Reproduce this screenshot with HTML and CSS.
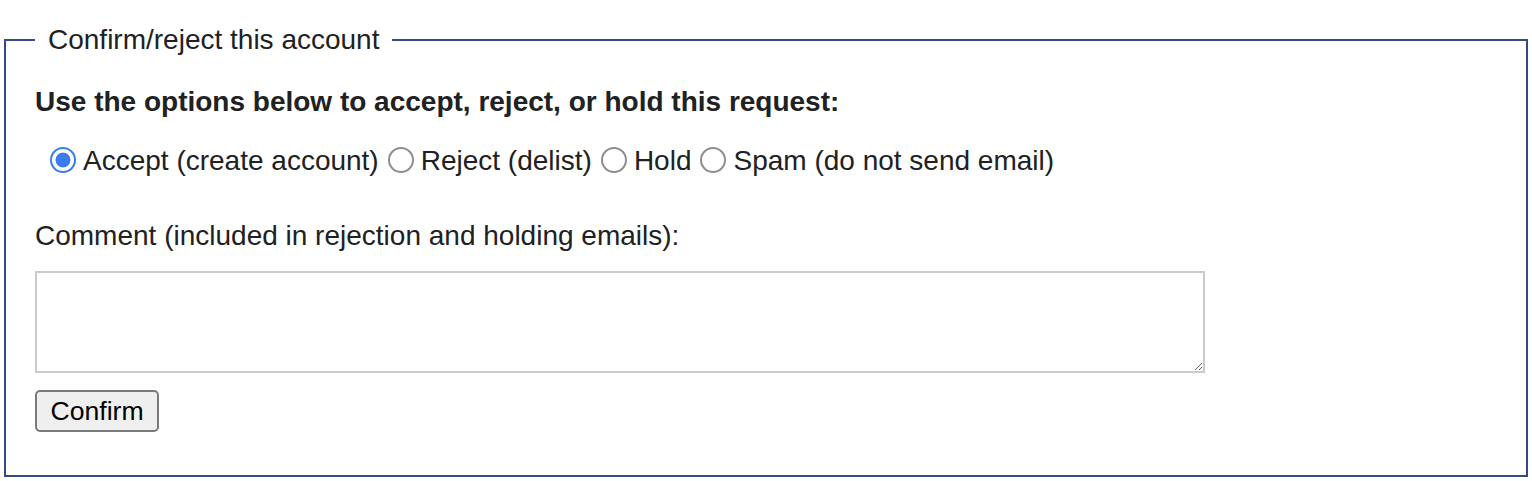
FILE: index.html
```html
<!DOCTYPE html>
<html lang="en">
<head>
<meta charset="utf-8">
<title>Confirm/reject this account</title>
<link rel="stylesheet" href="styles.css">
</head>
<body>
<form class="form">
  <fieldset class="box">
    <legend class="box-legend">Confirm/reject this account</legend>
    <p class="intro">Use the options below to accept, reject, or hold this request:</p>
    <div class="options">
      <label class="option"><input class="radio" type="radio" name="action" checked><span class="option-text">Accept (create account)</span></label>
      <label class="option"><input class="radio" type="radio" name="action"><span class="option-text">Reject (delist)</span></label>
      <label class="option"><input class="radio" type="radio" name="action"><span class="option-text">Hold</span></label>
      <label class="option"><input class="radio" type="radio" name="action"><span class="option-text">Spam (do not send email)</span></label>
    </div>
    <label class="comment-label" for="comment">Comment (included in rejection and holding emails):</label>
    <textarea class="comment" id="comment"></textarea>
    <div class="actions">
      <button class="confirm" type="button">Confirm</button>
    </div>
  </fieldset>
</form>
</body>
</html>
```
FILE: styles.css
```css
html, body {
  margin: 0;
  padding: 0;
  background: #ffffff;
}

body {
  font-family: "Liberation Sans", Arial, Helvetica, sans-serif;
  font-size: 28px;
  line-height: 44px;
  color: #202122;
}

.form {
  margin: 0;
  padding: 18px 4px 4px 4px;
}

.box {
  margin: 0;
  border: 2px solid #34498a;
  padding: 18px 29px 43px 29px;
  min-width: 0;
}

.box-legend {
  padding: 0 13px;
  margin: 0;
  line-height: 44px;
  color: #202122;
}

.intro {
  margin: 0;
  font-weight: bold;
}

.options {
  display: flex;
  align-items: center;
  padding-left: 15px;
  margin-top: 15px;
}

.option {
  display: flex;
  align-items: center;
  color: #202122;
}

.option-text {
  margin-right: 9px;
}

.radio {
  appearance: none;
  -webkit-appearance: none;
  width: 26px;
  height: 26px;
  margin: 0 7px 0 0;
  border: 2px solid #8e8e8e;
  border-radius: 50%;
  background: #fff;
  box-sizing: border-box;
  flex: none;
  position: relative;
  top: -1px;
}

.radio:checked {
  border: 2px solid #3a7cf0;
  background: radial-gradient(circle, #3a7cf0 0 7px, #ffffff 7.8px);
}

.comment-label {
  display: block;
  margin-top: 31px;
}

.comment {
  display: block;
  box-sizing: border-box;
  width: 1170px;
  height: 102px;
  margin-top: 13px;
  border: 2px solid #c8ccd1;
  border-radius: 0;
  font: inherit;
  resize: both;
  padding: 4px;
}

.actions {
  margin-top: 17px;
}

.confirm {
  display: block;
  box-sizing: border-box;
  width: 124px;
  height: 42px;
  margin: 0;
  padding: 0;
  border: 2px solid #7a7a7a;
  border-radius: 5px;
  background: #efefef;
  font-family: "Liberation Sans", Arial, Helvetica, sans-serif;
  font-size: 26.6px;
  line-height: 38px;
  color: #000;
}
```
